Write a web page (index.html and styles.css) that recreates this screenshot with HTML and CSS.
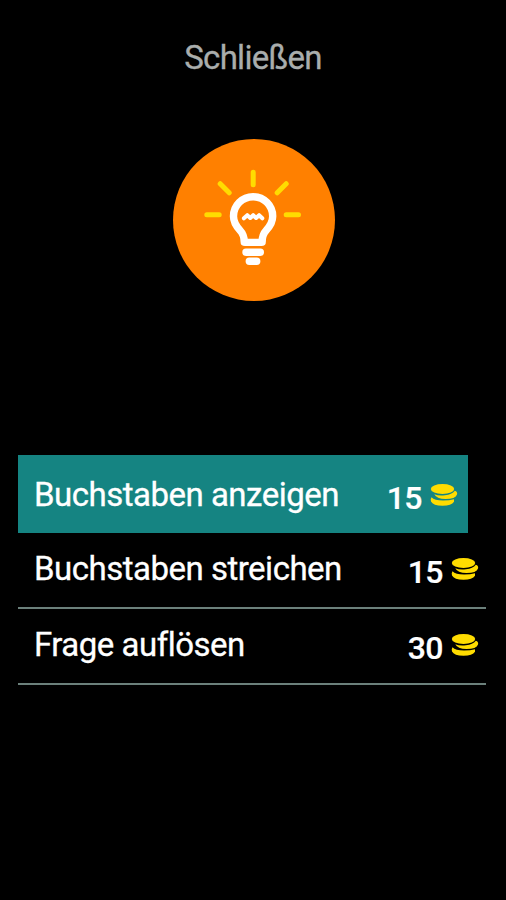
FILE: index.html
```html
<!DOCTYPE html>
<html lang="de">
<head>
  <meta charset="UTF-8">
  <title>Hilfe</title>
  <link rel="stylesheet" href="styles.css">
</head>
<body>
  <!-- coin stack, used once per row -->
  <svg class="defs" width="0" height="0">
    <symbol id="coins" viewBox="0 0 28 24">
      <ellipse cx="12.5" cy="6" rx="11.7" ry="5"/>
      <path d="M4.3 11.3Q8.5 13.1 15 12.3Q22 11.6 24.8 7.8Q27.8 8.8 27 11.5Q25.5 16 15.5 16Q6.5 16 4.3 11.3Z"/>
      <path d="M1.5 14.2Q.2 16 1 18.5Q3.2 22.7 12.5 22.7Q21.5 22.7 24 18.8V16.2Q19.5 17.6 13 17.6Q4.5 17.4 1.5 14.2Z"/>
    </symbol>
  </svg>

  <button type="button" class="close">Schließen</button>

  <svg class="bulb" viewBox="0 0 162 162">
    <circle cx="81" cy="81" r="81" fill="#ff8000"/>
    <g class="rays">
      <path d="M80.2 33.2V45.8M47.2 44.7L56.2 53.8M113.2 44.7L104.2 53.8M33.8 75.8H46.2M113.2 75.8H125.5"/>
    </g>
    <g class="glass">
      <path d="M72 103.4H88.4Q89.2 103.4 89.2 102.5C89.2 98 90.2 94.5 93.3 91.2C97.2 87 99.7 83.5 99.7 77.3A19.6 19.6 0 0 0 60.5 77.3C60.5 83.5 63 87 66.9 91.2C70 94.5 71.2 98 71.2 102.5Q71.2 103.4 72 103.4Z"/>
      <path class="wire" d="M70.9 79.3L74.3 76.2L77.3 79L80.2 76.2L83.1 79L86.1 76.2L89.3 79.3"/>
      <path d="M73 113.2H87.3M76.3 122.3H83.7"/>
    </g>
  </svg>

  <ul class="options">
    <li class="option active">
      <span class="label">Buchstaben anzeigen</span>
      <span class="price">15</span>
      <svg class="coins"><use href="#coins"/></svg>
    </li>
    <li class="option">
      <span class="label">Buchstaben streichen</span>
      <span class="price">15</span>
      <svg class="coins"><use href="#coins"/></svg>
    </li>
    <li class="option">
      <span class="label">Frage auflösen</span>
      <span class="price">30</span>
      <svg class="coins"><use href="#coins"/></svg>
    </li>
  </ul>
</body>
</html>
```
FILE: styles.css
```css
body {
  margin: 0;
  height: 900px;
  background: #000;
  color: #fff;
  font-family: Roboto, sans-serif;
  display: flex;
  flex-direction: column;
  align-items: center;
  overflow: hidden;
}
.defs {
  display: block;
}
.close {
  margin: 38px 0 0;
  padding: 0;
  height: 40px;
  border: none;
  background: none;
  color: #a9adac;
  font: 33px/40px Roboto, sans-serif;
  letter-spacing: -0.7px;
  -webkit-text-stroke: 0.3px;
  cursor: pointer;
}
.bulb {
  width: 162px;
  height: 162px;
  margin-top: 61px;
  margin-left: 1px;
  flex-shrink: 0;
}
.rays {
  fill: none;
  stroke: #ffdc00;
  stroke-width: 5;
  stroke-linecap: round;
}
.glass {
  fill: none;
  stroke: #fff;
  stroke-width: 7.4;
  stroke-linecap: round;
  stroke-linejoin: round;
}
.glass .wire {
  stroke-width: 4;
}
.options {
  list-style: none;
  align-self: stretch;
  margin: 154px 20px 0 18px;
  padding: 0;
}
.option {
  display: flex;
  align-items: flex-start;
  box-sizing: border-box;
  height: 76px;
  padding: 16px 7px 0 16px;
  border-bottom: 2px solid #6b807b;
}
.option.active {
  height: 78px;
  margin-right: 18px;
  padding-top: 20px;
  padding-right: 10px;
  background: #158482;
  border-bottom: none;
}
.option:nth-child(2) {
  height: 75.5px;
}
.label {
  flex: 1;
  font-size: 33px;
  line-height: 40px;
  letter-spacing: -0.5px;
  white-space: nowrap;
  -webkit-text-stroke: 0.3px;
}
.price {
  margin-top: 3px;
  font-size: 32px;
  font-weight: 500;
  line-height: 40px;
  letter-spacing: -0.5px;
  -webkit-text-stroke: 0.2px;
}
.coins {
  width: 28px;
  height: 24px;
  margin: 8px 0 0 8px;
  fill: #ffdc00;
}
```
